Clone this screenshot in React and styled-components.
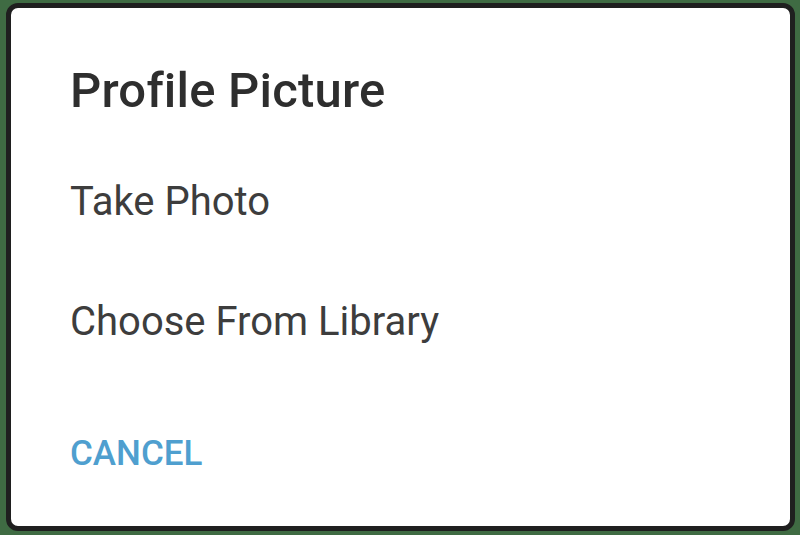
import React from 'react'
import styled, { createGlobalStyle } from 'styled-components'

const GlobalStyle = createGlobalStyle`
  html, body {
    margin: 0;
    padding: 0;
    background: #3f6b43;
  }
  #root {
    height: 535px;
    display: flex;
    padding: 3px 5px 4px 6px;
    box-sizing: border-box;
  }
`

const Dialog = styled.div`
  flex: 1;
  background: #fff;
  border: 5px solid #1f1f1f;
  border-radius: 12px;
  display: flex;
  flex-direction: column;
  padding: 58px 0 0 59px;
  font-family: Roboto, "Liberation Sans", sans-serif;
`

const Title = styled.h1`
  margin: 0;
  font-size: 49px;
  font-weight: 500;
  letter-spacing: 0.2px;
  color: #2e2e2e;
  line-height: 1;
`

const Option = styled.div`
  margin-top: ${p => p.$gap}px;
  font-size: 40px;
  color: #3d3d3d;
  line-height: 1;
`

const Cancel = styled.div`
  margin-top: 94px;
  font-size: 35px;
  font-weight: 500;
  color: #4f9fcf;
  line-height: 1;
`

export default function App() {
  return (
    <>
      <GlobalStyle />
      <Dialog>
        <Title>Profile Picture</Title>
        <Option $gap={67}>Take Photo</Option>
        <Option $gap={80}>Choose From Library</Option>
        <Cancel>CANCEL</Cancel>
      </Dialog>
    </>
  )
}
